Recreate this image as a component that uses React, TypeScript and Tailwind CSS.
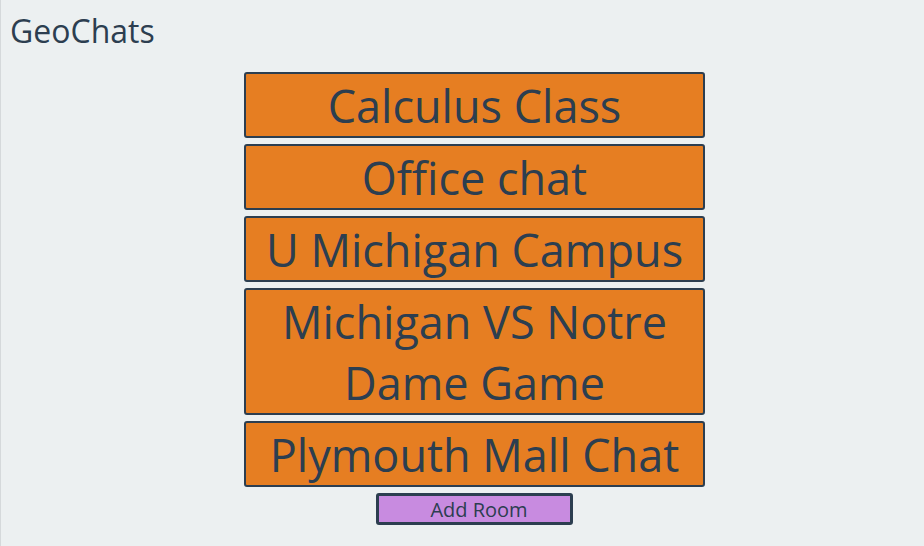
const rooms = [
  'Calculus Class',
  'Office chat',
  'U Michigan Campus',
  'Michigan VS Notre Dame Game',
  'Plymouth Mall Chat',
];

export default function App() {
  return (
    <div
      className="min-h-screen bg-[#ecf0f1] border-l border-[#d5d9db] text-[#2c3e50]"
      style={{ fontFamily: '"Open Sans", sans-serif' }}
    >
      <h1 className="text-[32px] leading-[44px] pl-[9px] pt-[9px]">GeoChats</h1>
      <div className="flex flex-col items-center mt-[19px] gap-[6px] pl-[24px]">
        {rooms.map((room) => (
          <div
            key={room}
            className="w-[461px] bg-[#e67e22] border-2 border-[#2c3e50] rounded-[3px] text-center text-[45px] leading-[61px] pt-px"
          >
            {room}
          </div>
        ))}
        <button className="w-[197px] h-[32px] pl-[9px] pt-[2px] bg-[#c88be0] border-[3px] border-[#2c3e50] rounded-[3px] text-[20px] leading-none">
          Add Room
        </button>
      </div>
    </div>
  );
}
